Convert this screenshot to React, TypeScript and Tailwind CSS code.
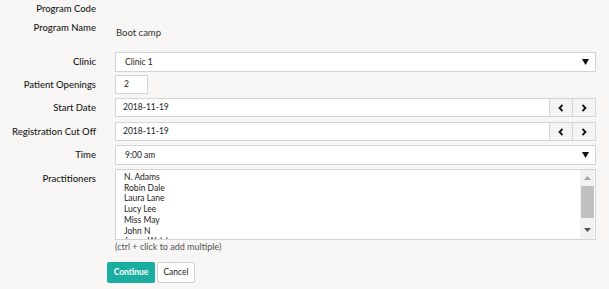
import React from "react"

const practitioners = ["N. Adams", "Robin Dale", "Laura Lane", "Lucy Lee", "Miss May", "John N", "Jenny Walsh"]

function Label({ children }: { children: React.ReactNode }) {
  return (
    <div className="w-[96px] shrink-0 text-right text-[9.5px] font-medium text-[#1a1a1a] leading-[12px]">{children}</div>
  )
}

function Caret() {
  return (
    <svg width="7" height="6" viewBox="0 0 7 6" className="shrink-0">
      <path d="M0 0 H7 L3.5 6 Z" fill="#111" />
    </svg>
  )
}

function Chevron({ dir }: { dir: "left" | "right" }) {
  return (
    <svg width="6" height="8" viewBox="0 0 6 8">
      <path
        d={dir === "left" ? "M4.5 1 L1.5 4 L4.5 7" : "M1.5 1 L4.5 4 L1.5 7"}
        fill="none"
        stroke="#111"
        strokeWidth="1.8"
      />
    </svg>
  )
}

function SelectBox({ value }: { value: string }) {
  return (
    <div className="flex-1 h-[20px] bg-white border border-[#d4d4d4] flex items-center justify-between pl-[9px] pr-[6px] text-[8.5px] text-[#222]">
      <span>{value}</span>
      <Caret />
    </div>
  )
}

function DateBox({ value }: { value: string }) {
  return (
    <div className="flex-1 flex h-[19px]">
      <div className="flex-1 bg-white border border-[#d4d4d4] flex items-center pl-[7px] text-[8.5px] text-[#222]">
        {value}
      </div>
      <div className="w-[23px] bg-[#f4f4f4] border border-l-0 border-[#d4d4d4] flex items-center justify-center">
        <Chevron dir="left" />
      </div>
      <div className="w-[23px] bg-[#f4f4f4] border border-l-0 border-[#d4d4d4] flex items-center justify-center">
        <Chevron dir="right" />
      </div>
    </div>
  )
}

export default function App() {
  return (
    <div className="w-[609px] h-[289px] bg-[#f7f6f4] overflow-hidden font-['Lato',sans-serif] pr-[13px]">
      <div className="flex items-center h-[18px]">
        <Label>Program Code</Label>
      </div>

      <div className="flex items-start mt-[4px] h-[18px]">
        <Label>Program Name</Label>
        <div className="ml-[20px] pt-[5px] text-[9.5px] text-[#333] leading-[12px]">Boot camp</div>
      </div>

      <div className="flex items-center mt-[12px]">
        <Label>Clinic</Label>
        <div className="ml-[19px] flex-1 flex">
          <SelectBox value="Clinic 1" />
        </div>
      </div>

      <div className="flex items-center mt-[3px]">
        <Label>Patient Openings</Label>
        <div className="ml-[19px] w-[33px] h-[19px] bg-white border border-[#d4d4d4] flex items-center pl-[8px] text-[8.5px] text-[#222]">
          2
        </div>
      </div>

      <div className="flex items-center mt-[4px]">
        <Label>Start Date</Label>
        <div className="ml-[19px] flex-1 flex">
          <DateBox value="2018-11-19" />
        </div>
      </div>

      <div className="flex items-center mt-[5px]">
        <Label>Registration Cut Off</Label>
        <div className="ml-[19px] flex-1 flex">
          <DateBox value="2018-11-19" />
        </div>
      </div>

      <div className="flex items-center mt-[4px]">
        <Label>Time</Label>
        <div className="ml-[19px] flex-1 flex">
          <SelectBox value="9:00 am" />
        </div>
      </div>

      <div className="flex items-start mt-[4px]">
        <div className="pt-[4px]">
          <Label>Practitioners</Label>
        </div>
        <div className="ml-[19px] flex-1">
          <div className="h-[71px] bg-white border border-[#d4d4d4] flex overflow-hidden">
            <div className="flex-1 pl-[8px] pt-[2px] text-[8.5px] text-[#222] leading-[10.7px] overflow-hidden">
              {practitioners.map((p) => (
                <div key={p}>{p}</div>
              ))}
            </div>
            <div className="w-[14px] bg-[#f1f1f1] flex flex-col items-center mr-[1px]">
              <div className="h-[16px] flex items-center justify-center">
                <svg width="7" height="4" viewBox="0 0 7 4">
                  <path d="M0 4 L3.5 0 L7 4 Z" fill="#a3a3a3" />
                </svg>
              </div>
              <div className="w-[13px] h-[32px] bg-[#c1c1c1]" />
              <div className="flex-1 flex items-end justify-center pb-[7px]">
                <svg width="7" height="4" viewBox="0 0 7 4">
                  <path d="M0 0 H7 L3.5 4 Z" fill="#505050" />
                </svg>
              </div>
            </div>
          </div>
          <div className="mt-[1px] text-[9px] text-[#555] leading-[12px]">(ctrl + click to add multiple)</div>
        </div>
      </div>

      <div className="flex items-center gap-[2px] ml-[107px] mt-[9px]">
        <button className="w-[48px] h-[21px] bg-[#1aaea0] text-white text-[8.5px] font-bold rounded-[2px] flex items-center justify-center">
          Continue
        </button>
        <button className="w-[38px] h-[21px] bg-white border border-[#cfcfcf] text-[#222] text-[8.5px] rounded-[2px] flex items-center justify-center">
          Cancel
        </button>
      </div>
    </div>
  )
}
